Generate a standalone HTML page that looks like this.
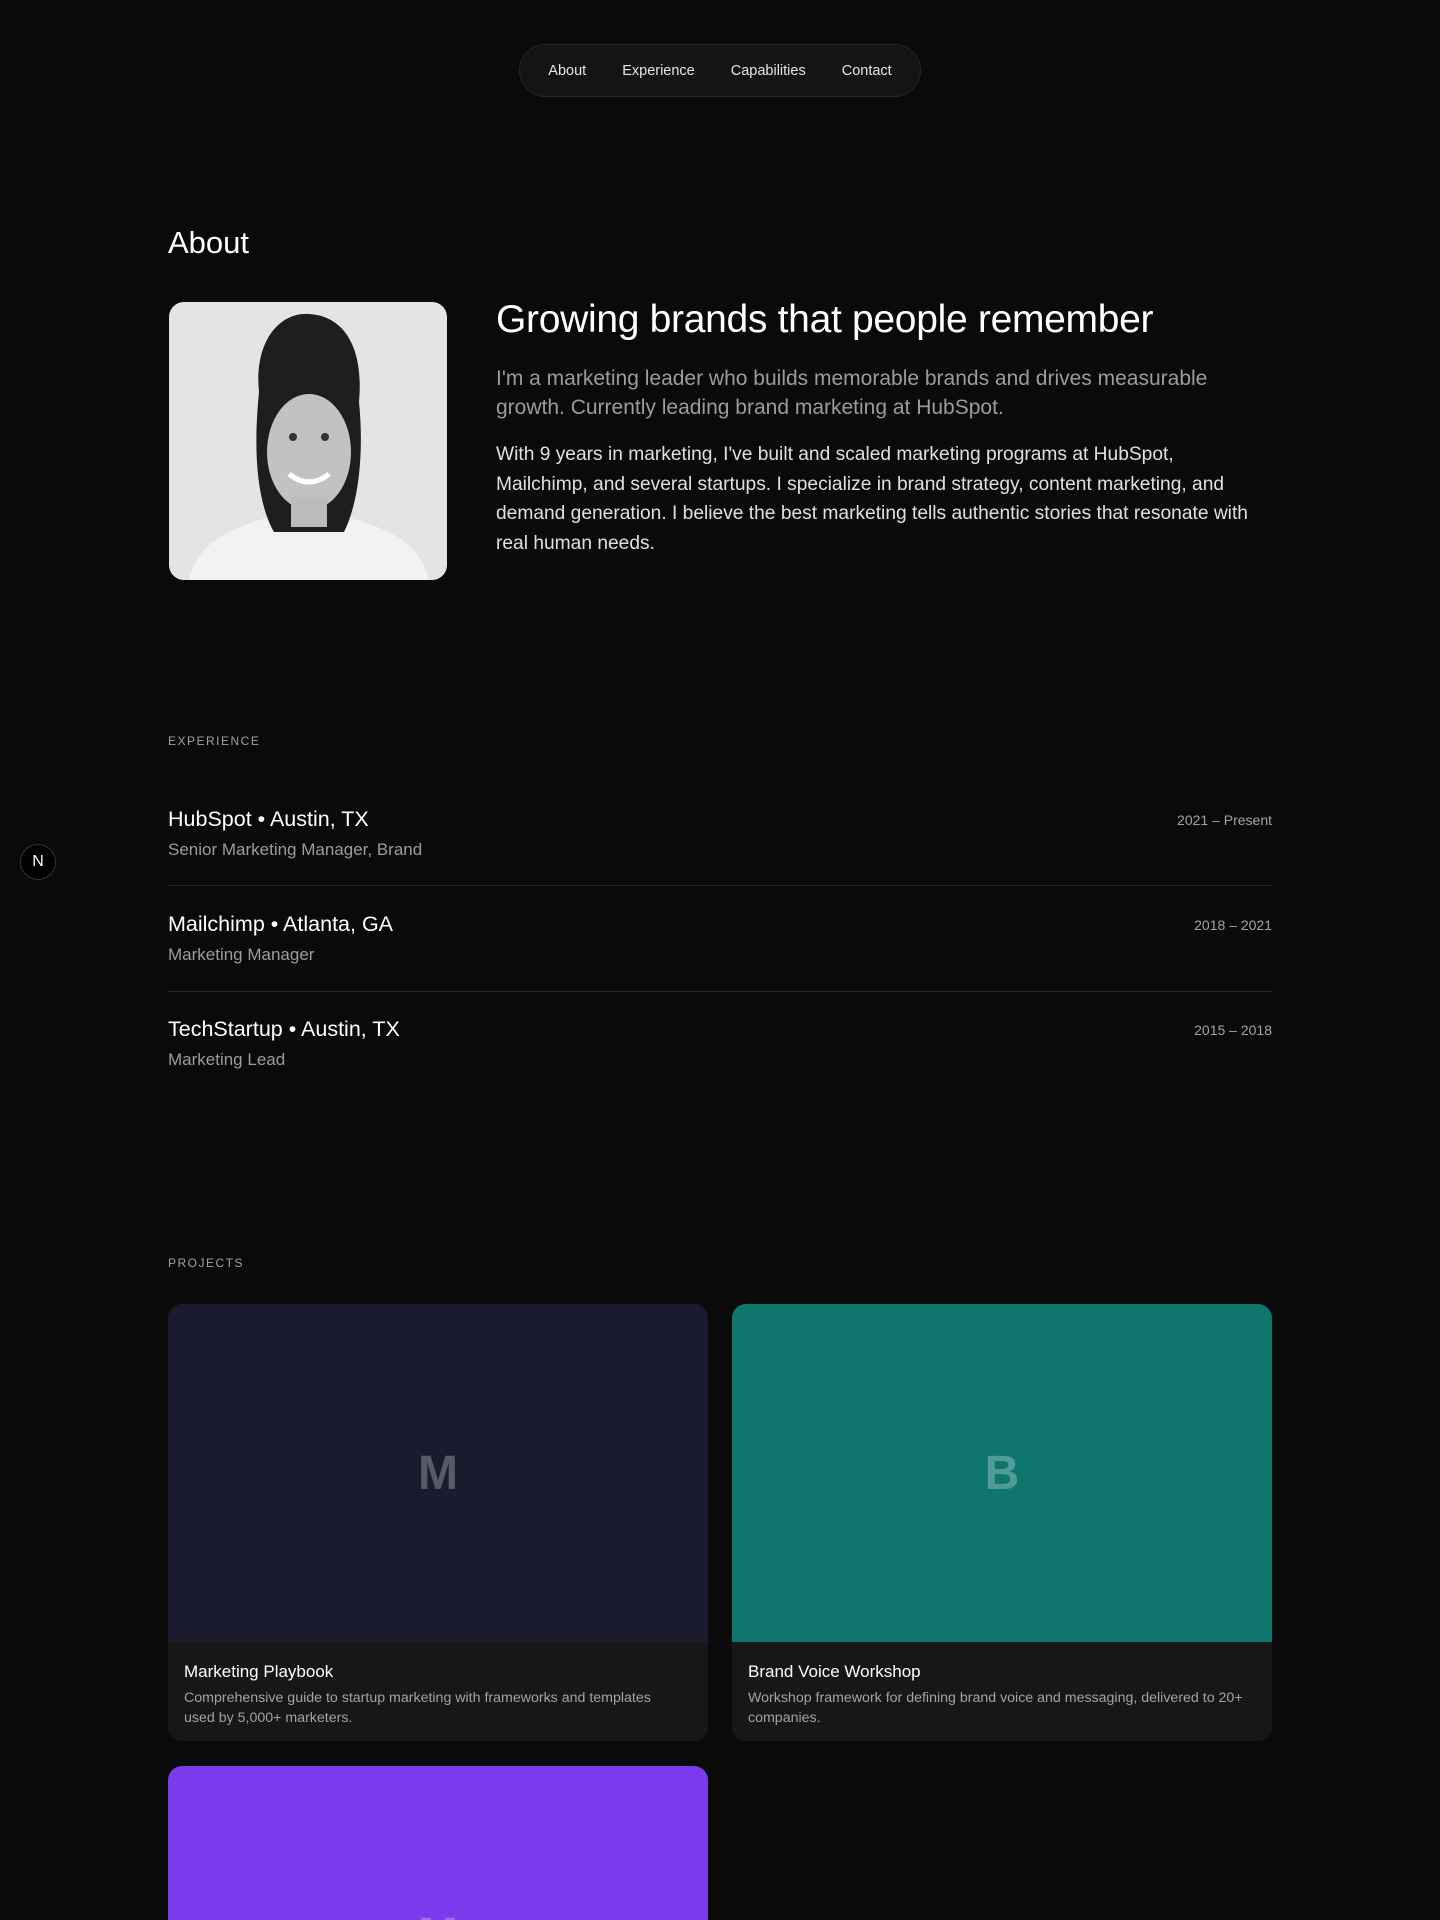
<!DOCTYPE html>
<html><head><meta charset="utf-8"><style>
*{margin:0;padding:0;box-sizing:border-box}
html,body{width:1440px;height:1920px;overflow:hidden}
body{background:#0a0a0a;font-family:"Liberation Sans",sans-serif;color:#fff;position:relative}
.nav{position:absolute;left:519px;top:44px;width:402px;height:53px;border:1px solid #262626;background:#141414;border-radius:27px;display:flex;align-items:center;justify-content:center;gap:36px;font-size:14.5px;font-weight:500;color:#e5e5e5}
.abs{position:absolute}
h2{position:absolute;left:168px;top:225px;font-size:31px;font-weight:500}
.photo{left:169px;top:302px;width:278px;height:278px;border-radius:15px;background:#e4e4e4;overflow:hidden}
.h1{left:496px;top:298px;font-size:39px;font-weight:500;letter-spacing:-0.3px;white-space:nowrap}
.lead{left:496px;top:364px;width:730px;font-size:21px;line-height:29px;color:#9c9c9c;font-weight:300}
.body{left:496px;top:440px;width:762px;font-size:19.2px;line-height:29.7px;color:#e0e0e0}
.label{left:168px;font-size:12px;letter-spacing:1.5px;color:#a3a3a3}
.item{left:168px;width:1104px}
.item .t{font-size:21.5px;font-weight:500}
.item .s{font-size:17px;color:#9c9c9c;margin-top:8px}
.item .d{position:absolute;right:0;top:5px;font-size:14px;color:#a3a3a3}
.hr{left:168px;width:1104px;height:1px;background:#262626}
.card{width:540px;border-radius:14px;overflow:hidden;background:#171717}
.card .img{height:338px;display:flex;align-items:center;justify-content:center;font-size:48px;font-weight:700;color:rgba(255,255,255,.28)}
.card .bd{padding:20px 26px 16px 16px;height:99px}
.card .ct{font-size:17px;font-weight:500}
.card .cd{font-size:14.2px;line-height:20px;color:#a3a3a3;margin-top:6px}
.nb{left:20px;top:844px;width:36px;height:36px;border-radius:50%;background:#000;border:1px solid #333;display:flex;align-items:center;justify-content:center;font-size:16px;font-weight:500}
</style></head><body>
<div class="nav"><span>About</span><span>Experience</span><span>Capabilities</span><span>Contact</span></div>
<h2>About</h2>
<div class="abs photo">
<svg width="278" height="278" viewBox="0 0 278 278">
<path d="M20 278 C30 235 70 225 100 215 L178 215 C210 225 250 235 260 278Z" fill="#f2f2f2"/>
<path d="M90 90 C85 40 110 10 140 12 C175 14 195 45 190 100 C195 150 190 200 175 230 L105 230 C88 200 84 150 90 90Z" fill="#1e1e1e"/>
<ellipse cx="140" cy="150" rx="42" ry="58" fill="#c2c2c2"/>
<rect x="122" y="195" width="36" height="30" fill="#bcbcbc"/>
<path d="M120 172 Q140 188 160 172" stroke="#fff" stroke-width="5" fill="none"/>
<circle cx="124" cy="135" r="4" fill="#333"/><circle cx="156" cy="135" r="4" fill="#333"/>
</svg></div>
<div class="abs h1">Growing brands that people remember</div>
<div class="abs lead">I'm a marketing leader who builds memorable brands and drives measurable growth. Currently leading brand marketing at HubSpot.</div>
<div class="abs body">With 9 years in marketing, I've built and scaled marketing programs at HubSpot, Mailchimp, and several startups. I specialize in brand strategy, content marketing, and demand generation. I believe the best marketing tells authentic stories that resonate with real human needs.</div>
<div class="abs label" style="top:734px">EXPERIENCE</div>
<div class="abs item" style="top:807px"><div class="t">HubSpot • Austin, TX</div><div class="s">Senior Marketing Manager, Brand</div><div class="d">2021 – Present</div></div>
<div class="abs hr" style="top:885px"></div>
<div class="abs item" style="top:912px"><div class="t">Mailchimp • Atlanta, GA</div><div class="s">Marketing Manager</div><div class="d">2018 – 2021</div></div>
<div class="abs hr" style="top:991px"></div>
<div class="abs item" style="top:1017px"><div class="t">TechStartup • Austin, TX</div><div class="s">Marketing Lead</div><div class="d">2015 – 2018</div></div>
<div class="abs nb">N</div>
<div class="abs label" style="top:1256px">PROJECTS</div>
<div class="abs card" style="left:168px;top:1304px"><div class="img" style="background:#1a1b2e">M</div><div class="bd"><div class="ct">Marketing Playbook</div><div class="cd">Comprehensive guide to startup marketing with frameworks and templates used by 5,000+ marketers.</div></div></div>
<div class="abs card" style="left:732px;top:1304px"><div class="img" style="background:#0f766e">B</div><div class="bd"><div class="ct">Brand Voice Workshop</div><div class="cd">Workshop framework for defining brand voice and messaging, delivered to 20+ companies.</div></div></div>
<div class="abs card" style="left:168px;top:1766px;height:154px;border-radius:14px 14px 0 0"><div class="img" style="background:#7c3aed">M</div></div>
</body></html>
